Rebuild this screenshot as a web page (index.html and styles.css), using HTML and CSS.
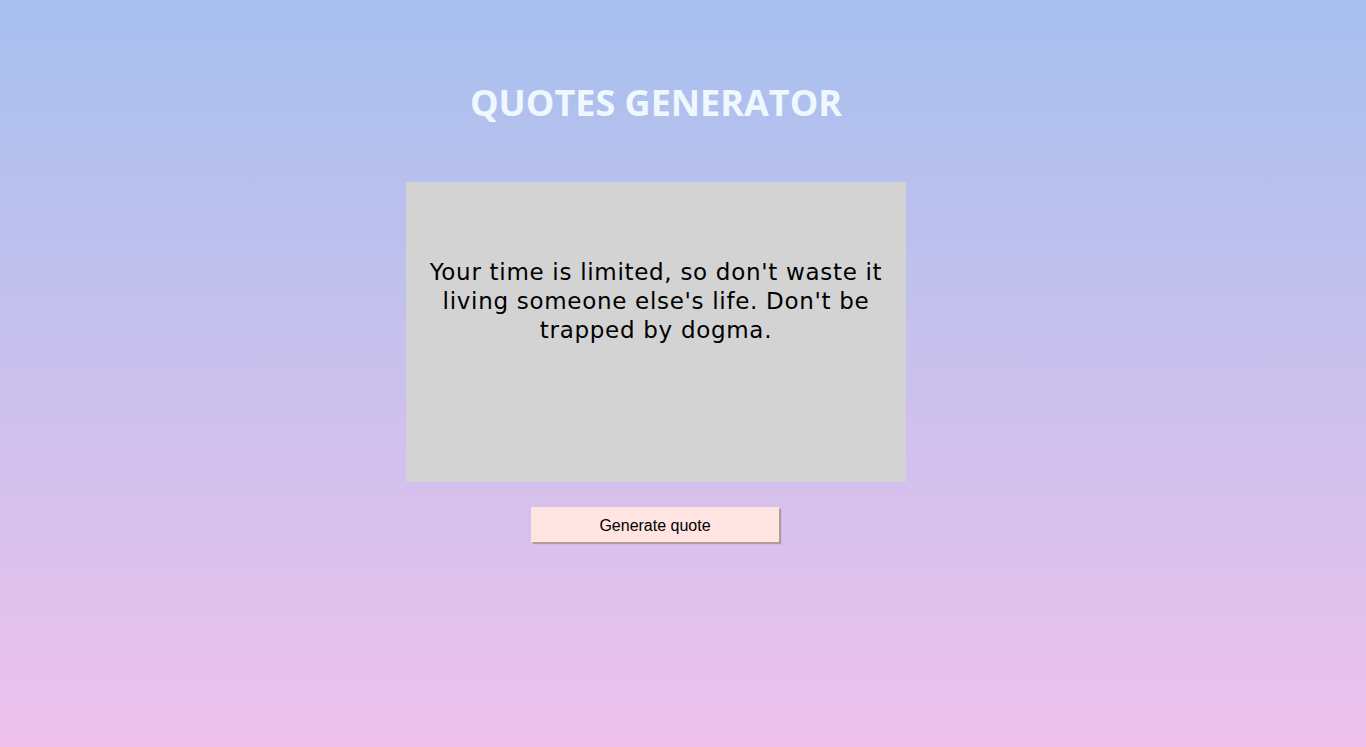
FILE: index.html
```html
<!DOCTYPE html>
<html>
<head>
<meta charset="utf-8">
<title>Quotes Generator</title>
<link rel="stylesheet" href="styles.css">
</head>
<body>
<main class="app">
  <h1 class="title">QUOTES GENERATOR</h1>
  <div class="quote-box">
    <p class="quote">Your time is limited, so don't waste it living someone else's life. Don't be trapped by dogma.</p>
  </div>
  <button class="btn" type="button">Generate quote</button>
</main>
</body>
</html>
```
FILE: styles.css
```css
html, body {
  margin: 0;
  height: 100%;
}
body {
  background: linear-gradient(to bottom, #a6c0ee 0%, #eec1ec 100%);
  font-family: "DejaVu Sans", Verdana, sans-serif;
}
.app {
  display: flex;
  flex-direction: column;
  align-items: center;
  padding-right: 54px;
  padding-top: 77px;
}
.title {
  margin: 0;
  font-family: "Open Sans", sans-serif;
  font-weight: 700;
  font-size: 36px;
  line-height: 52px;
  color: #f0f8ff;
}
.quote-box {
  margin-top: 53px;
  width: 500px;
  height: 300px;
  box-sizing: border-box;
  padding: 76px 14px 0;
  background: #d3d3d3;
}
.quote {
  margin: 0;
  text-align: center;
  font-size: 23px;
  line-height: 29px;
  letter-spacing: 0.7px;
  color: #000;
}
.btn {
  margin-top: 25px;
  margin-right: 2px;
  width: 248px;
  height: 35px;
  border: none;
  background: #ffe4e1;
  box-shadow: 2px 2px 1px #b39a98;
  font-family: "Liberation Sans", Arial, sans-serif;
  font-size: 16px;
  color: #000;
  padding: 2px 0 0;
}
```
